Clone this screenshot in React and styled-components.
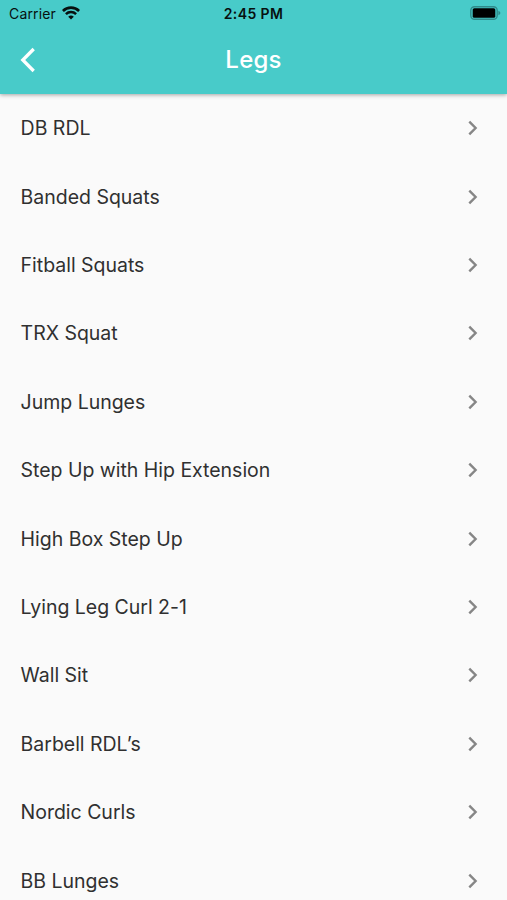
import React from 'react';
import styled, { createGlobalStyle } from 'styled-components';

const exercises = [
  'DB RDL',
  'Banded Squats',
  'Fitball Squats',
  'TRX Squat',
  'Jump Lunges',
  'Step Up with Hip Extension',
  'High Box Step Up',
  'Lying Leg Curl 2-1',
  'Wall Sit',
  'Barbell RDL’s',
  'Nordic Curls',
  'BB Lunges',
];

function App() {
  return (
    <Screen>
      <GlobalStyle />
      <Header>
        <StatusBar>
          <Carrier>
            Carrier
            <WifiIcon />
          </Carrier>
          <Time>2:45 PM</Time>
          <BatteryIcon />
        </StatusBar>
        <NavBar>
          <BackButton aria-label="Back">
            <svg width="16" height="26" viewBox="0 0 16 26">
              <path d="M13.7 2 L2.8 13 L13.7 24" fill="none" stroke="#fff" strokeWidth="3.3" />
            </svg>
          </BackButton>
          <Title>Legs</Title>
        </NavBar>
      </Header>
      <List>
        {exercises.map((name) => (
          <Row key={name}>
            <span>{name}</span>
            <svg width="10" height="16" viewBox="0 0 10 16">
              <path d="M1.3 1.7 L7.6 8 L1.3 14.3" fill="none" stroke="#868686" strokeWidth="2.4" />
            </svg>
          </Row>
        ))}
      </List>
    </Screen>
  );
}

function WifiIcon() {
  return (
    <svg width="18" height="14" viewBox="0 0 18 14">
      <path d="M0.9 5 A11.5 11.5 0 0 1 17.1 5" fill="none" stroke="#07100f" strokeWidth="2.7" />
      <path d="M3.9 8.2 A7.3 7.3 0 0 1 14.1 8.2" fill="none" stroke="#07100f" strokeWidth="2.5" />
      <path d="M9 13.6 L6.2 10.8 A4 4 0 0 1 11.8 10.8 Z" fill="#07100f" />
    </svg>
  );
}

function BatteryIcon() {
  return (
    <svg width="31" height="14" viewBox="0 0 31 14">
      <rect x="0.8" y="0.7" width="26.4" height="12.6" rx="3.8" fill="none" stroke="#2f8b8b" strokeWidth="1.4" />
      <rect x="2.7" y="2.2" width="22.6" height="9.6" rx="1.6" fill="#000" />
      <path d="M28.4 4.8 Q30.4 5.5 30.4 7 Q30.4 8.5 28.4 9.2 Z" fill="#2f8b8b" />
    </svg>
  );
}

const GlobalStyle = createGlobalStyle`
  body {
    margin: 0;
    background: #fafafa;
    font-family: Inter, 'Liberation Sans', sans-serif;
  }
`

const Screen = styled.div`
  height: 900px;
  overflow: hidden;
  display: flex;
  flex-direction: column;
  background: #fafafa;
`

const Header = styled.header`
  flex: none;
  height: 94px;
  background: #48cbc9;
  box-shadow: 0 1px 4px rgba(0, 0, 0, .35);
  z-index: 1;
`

const StatusBar = styled.div`
  display: grid;
  grid-template-columns: 1fr auto 1fr;
  align-items: center;
  height: 27px;
  padding: 0 6px 0 9px;
  color: #07100f;

  > svg{
    justify-self: end;
    margin-bottom: 1px;
  }
`

const Carrier = styled.div`
  display: flex;
  align-items: center;
  gap: 6px;
  font-size: 14px;
  letter-spacing: .15px;

  svg{
    margin-bottom: 1px;
  }
`

const Time = styled.div`
  margin-right: 3px;
  font-size: 14px;
  font-weight: 600;
  letter-spacing: .4px;
  white-space: nowrap;
`

const NavBar = styled.div`
  display: grid;
  grid-template-columns: 60px 1fr 60px;
  align-items: center;
  height: 65px;
`

const BackButton = styled.button`
  display: flex;
  padding: 0 0 0 20px;
  border: none;
  background: none;
`

const Title = styled.h1`
  margin: 0;
  color: #fff;
  font-size: 24px;
  font-weight: 500;
  letter-spacing: .2px;
  text-align: center;
`

const List = styled.ul`
  margin: 0;
  padding: 0;
  list-style: none;
`

const Row = styled.li`
  display: flex;
  align-items: center;
  justify-content: space-between;
  height: 68.42px;
  padding: 0 29px 0 20.6px;
  color: #303030;
  font-size: 19.5px;
  letter-spacing: -.02px;
`

export default App;
